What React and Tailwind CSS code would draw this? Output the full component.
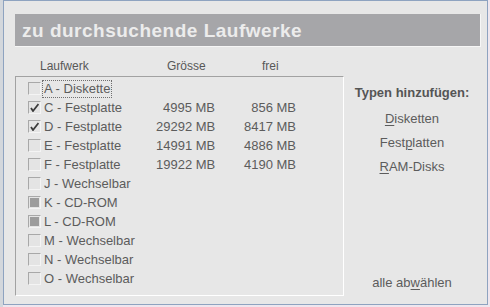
import React from 'react';

const drives = [
  { name: 'A - Diskette', state: 'off', focus: true },
  { name: 'C - Festplatte', state: 'on', size: '4995 MB', free: '856 MB' },
  { name: 'D - Festplatte', state: 'on', size: '29292 MB', free: '8417 MB' },
  { name: 'E - Festplatte', state: 'off', size: '14991 MB', free: '4886 MB' },
  { name: 'F - Festplatte', state: 'off', size: '19922 MB', free: '4190 MB' },
  { name: 'J - Wechselbar', state: 'off' },
  { name: 'K - CD-ROM', state: 'mixed' },
  { name: 'L - CD-ROM', state: 'mixed' },
  { name: 'M - Wechselbar', state: 'off' },
  { name: 'N - Wechselbar', state: 'off' },
  { name: 'O - Wechselbar', state: 'off' },
];

const CheckBox = ({ state }) => (
  <div className="w-[13px] h-[13px] shrink-0 border border-t-[#a8a8a8] border-l-[#a8a8a8] border-b-[#f4f4f4] border-r-[#f4f4f4] bg-[#e4e4e4] flex items-center justify-center">
    {state === 'on' && (
      <svg width="9" height="9" viewBox="0 0 9 9">
        <path d="M1 5 L3 8 L8.5 1" fill="none" stroke="#3a3a3a" strokeWidth="1.8" />
      </svg>
    )}
    {state === 'mixed' && <div className="w-[9px] h-[9px] bg-[#9c9c9c]" />}
  </div>
);

const Mnemonic = ({ before, letter, after }) => (
  <span>
    {before}
    <span className="underline underline-offset-2">{letter}</span>
    {after}
  </span>
);

export default function App() {
  return (
    <div
      className="w-[490px] h-[307px] bg-[#efe6ee] flex overflow-hidden"
      style={{ fontFamily: '"Liberation Sans", Arial, sans-serif' }}
    >
      <div className="w-[3px] h-full bg-[#d3d7dc]" />
      <div className="w-[485px] h-[305px] border border-[#8ea3c0] bg-[#e7e7e7] pl-[11px] pt-[13px] text-[#5c5c5c]">
        {/* Titel */}
        <div className="w-[466px] h-[33px] bg-[#a6a6a9] border-b border-r border-[#f6f6f6] flex items-center pl-[7px]">
          <span className="text-[19px] tracking-[0.5px] font-bold text-[#ececec] leading-none">
            zu durchsuchende Laufwerke
          </span>
        </div>

        {/* Spaltenköpfe */}
        <div className="mt-[9px] h-[20px] flex items-center text-[12px] text-[#585858]">
          <span className="ml-[25px] w-[127px]">Laufwerk</span>
          <span className="w-[95px]">Grösse</span>
          <span>frei</span>
        </div>

        <div className="flex">
          {/* Liste */}
          <div className="w-[329px] h-[220px] shrink-0 border border-t-[#a2a2a2] border-l-[#a2a2a2] border-b-white border-r-white pt-[2px] pl-[12px] text-[13px]">
            {drives.map((d) => (
              <div key={d.name} className="h-[19px] flex items-center whitespace-nowrap">
                <CheckBox state={d.state} />
                <div className="w-[115px] shrink-0 pl-[1px] flex">
                  <span
                    className={
                      d.focus
                        ? 'border border-dotted border-[#707070] px-[1px] leading-[16px]'
                        : 'px-[2px] leading-[16px]'
                    }
                  >
                    {d.name}
                  </span>
                </div>
                <span className="w-[59px] shrink-0 text-right">{d.size || ''}</span>
                <span className="w-[81px] shrink-0 text-right">{d.free || ''}</span>
              </div>
            ))}
          </div>

          {/* Rechte Spalte */}
          <div className="w-[136px] h-[220px] flex flex-col items-center text-[13px]">
            <div className="mt-[7px] text-[13px] font-bold text-[#555]">Typen hinzufügen:</div>
            <div className="mt-[4px] h-[24px] flex items-center">
              <Mnemonic before="" letter="D" after="isketten" />
            </div>
            <div className="h-[24px] flex items-center">
              <Mnemonic before="Fest" letter="p" after="latten" />
            </div>
            <div className="h-[24px] flex items-center">
              <Mnemonic before="" letter="R" after="AM-Disks" />
            </div>
            <div className="mt-auto mb-[3px] h-[20px] flex items-center">
              <Mnemonic before="alle ab" letter="w" after="ählen" />
            </div>
          </div>
        </div>
      </div>
    </div>
  );
}
